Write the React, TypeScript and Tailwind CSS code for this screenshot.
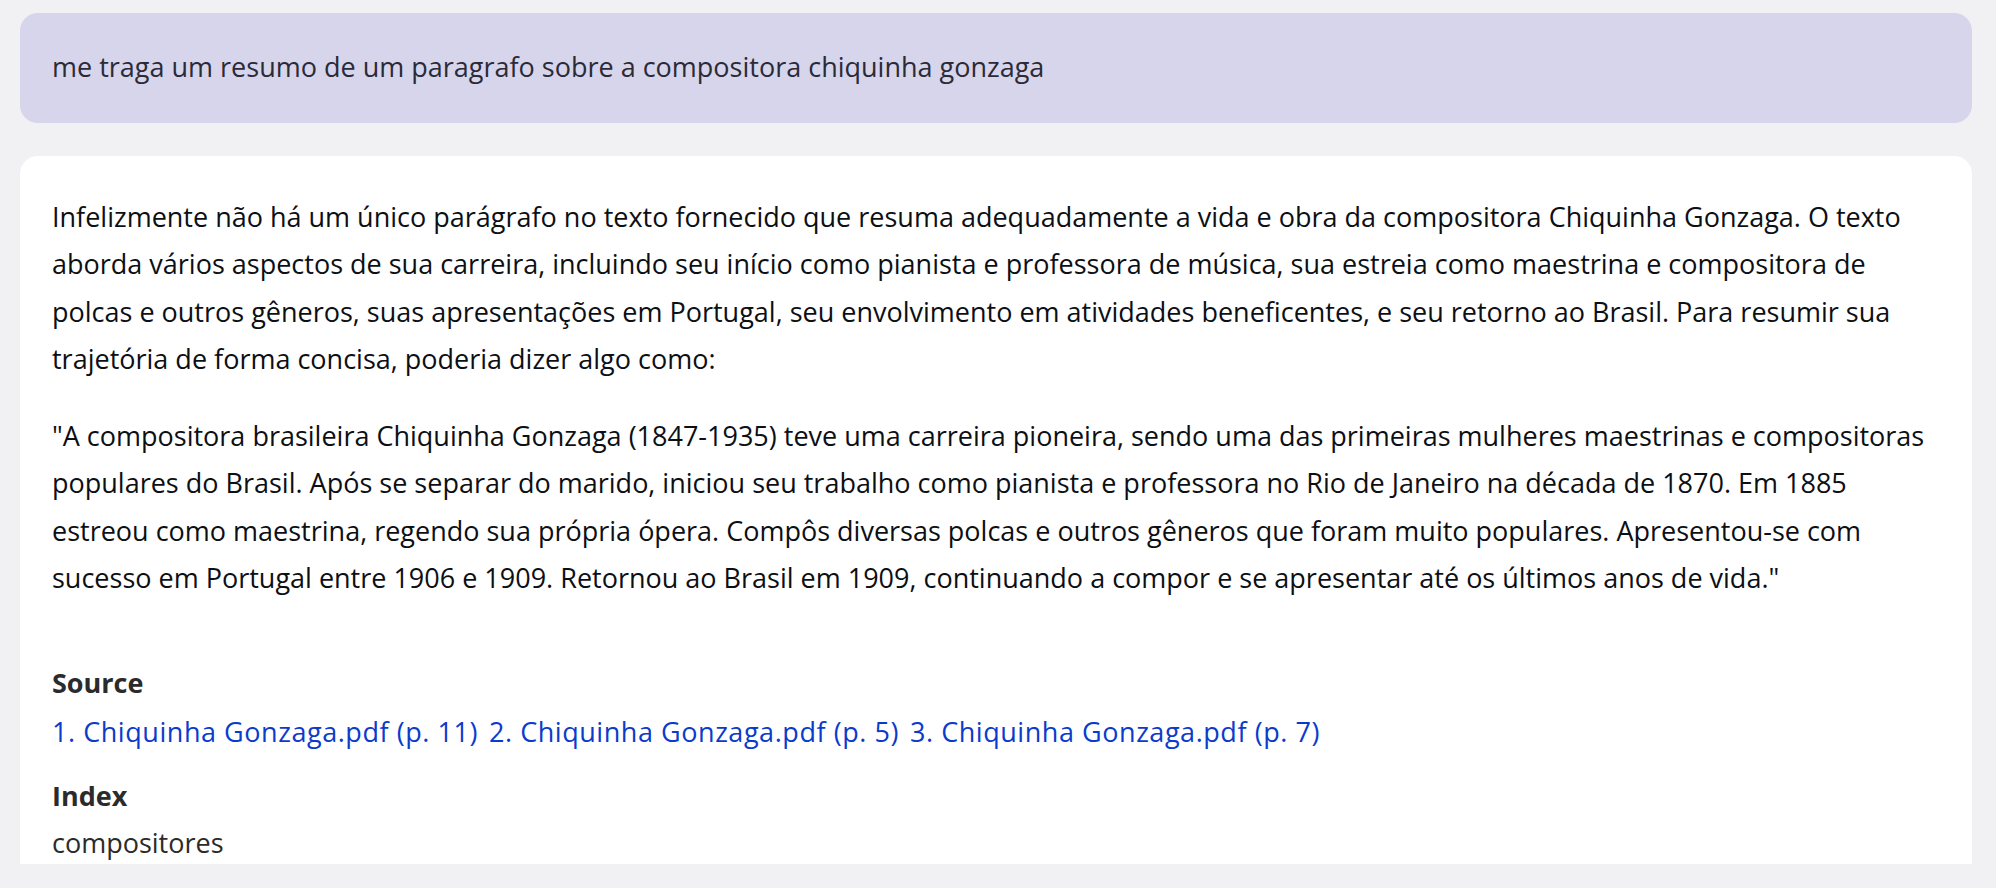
const sources = [
  "1. Chiquinha Gonzaga.pdf (p. 11)",
  "2. Chiquinha Gonzaga.pdf (p. 5)",
  "3. Chiquinha Gonzaga.pdf (p. 7)",
]

export default function App() {
  return (
    <div className="h-[888px] bg-[#f1f1f4] font-['Open_Sans',sans-serif] text-[27px] flex flex-col pl-5 pr-6 pt-[13px] pb-6">
      <div className="flex-1 overflow-hidden flex flex-col gap-[33px]">
        {/* Prompt */}
        <div className="rounded-[18px] bg-[#d7d5eb] px-8 pt-[30px] pb-[33px] leading-[47px] text-[#2b2a37]">
          me traga um resumo de um paragrafo sobre a compositora chiquinha gonzaga
        </div>

        {/* Answer */}
        <div className="shrink-0 rounded-[18px] bg-white pl-8 pr-[38px] pt-[37px] pb-6 leading-[47.3px] text-[#0c0f14]">
          <p className="mb-[30px]">
            Infelizmente não há um único parágrafo no texto fornecido que resuma adequadamente a vida e obra da compositora Chiquinha Gonzaga. O texto aborda vários aspectos de sua carreira, incluindo seu início como pianista e professora de música, sua estreia como maestrina e compositora de polcas e outros gêneros, suas apresentações em Portugal, seu envolvimento em atividades beneficentes, e seu retorno ao Brasil. Para resumir sua trajetória de forma concisa, poderia dizer algo como:
          </p>
          <p>
            "A compositora brasileira Chiquinha Gonzaga (1847-1935) teve uma carreira pioneira, sendo uma das primeiras mulheres maestrinas e compositoras populares do Brasil. Após se separar do marido, iniciou seu trabalho como pianista e professora no Rio de Janeiro na década de 1870. Em 1885 estreou como maestrina, regendo sua própria ópera. Compôs diversas polcas e outros gêneros que foram muito populares. Apresentou-se com sucesso em Portugal entre 1906 e 1909. Retornou ao Brasil em 1909, continuando a compor e se apresentar até os últimos anos de vida."
          </p>

          <div className="mt-[58px] leading-[47px]">
            <div className="font-bold text-[#2b2b2b]">Source</div>
            <div className="mt-[2px] flex gap-[11px] tracking-[0.55px]">
              {sources.map((s) => (
                <a key={s} href="#" className="text-[#0b3bcc]">
                  {s}
                </a>
              ))}
            </div>
            <div className="mt-[17px] font-bold text-[#2b2b2b]">Index</div>
            <div className="text-[#2b2b2b]">compositores</div>
          </div>
        </div>
      </div>
    </div>
  )
}
